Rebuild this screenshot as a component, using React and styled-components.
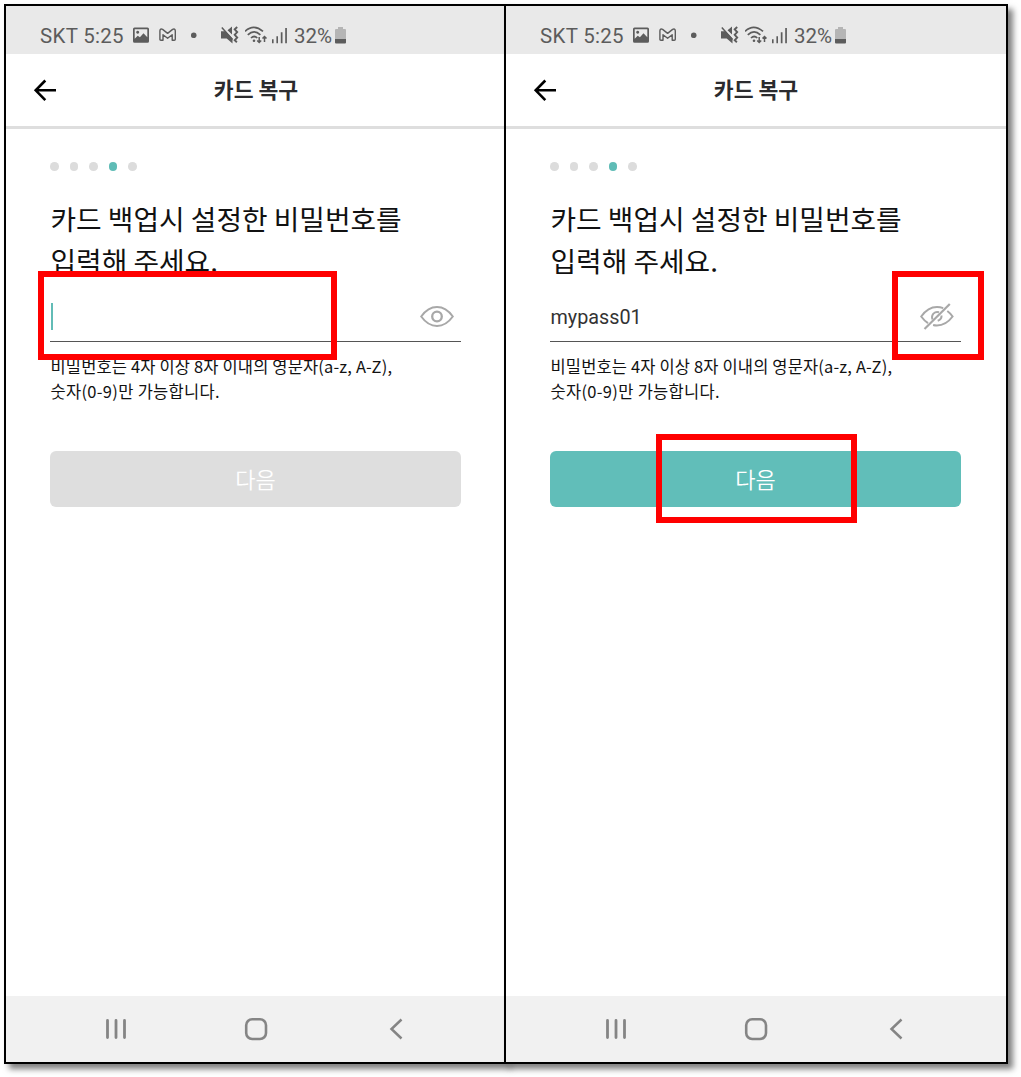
import React from "react";
import styled, { createGlobalStyle } from "styled-components";

const GlobalStyle = createGlobalStyle`
  * { box-sizing: border-box; }
  body { margin: 0; background: #fff; }
`;

const KR = `"Noto Sans CJK KR", sans-serif`;

const Board = styled.main`
  display: flex;
  width: 1021px;
  height: 1077px;
  padding: 4px;
  overflow: hidden;
`;

const Phone = styled.section`
  position: relative;
  display: flex;
  flex-direction: column;
  flex: none;
  width: ${(p) => p.$width}px;
  height: 1060px;
  border: 2px solid #000;
  background: #fff;
  box-shadow: 5px 5px 6px rgba(0, 0, 0, 0.5);
  & + & { margin-left: -2px; }
`;

const StatusBar = styled.div`
  display: flex;
  align-items: center;
  height: 48px;
  padding: 12px 0 0 34px;
  background: #e9e9e9;
  color: #5c5c5c;
  svg { display: block; flex: none; }
`;

const StatusText = styled.span`
  width: ${(p) => p.$width}px;
  font: 400 20.5px/24px Roboto, sans-serif;
  letter-spacing: ${(p) => p.$spacing || 0}px;
  white-space: nowrap;
`;

const Gap = styled.i`
  flex: none;
  width: ${(p) => p.$w}px;
`;

const Header = styled.header`
  display: grid;
  grid-template-columns: 28px 1fr 28px;
  align-items: center;
  height: 75px;
  padding: 0 ${(p) => p.$right}px 0 25px;
  border-bottom: 3px solid #dedede;
`;

const BackButton = styled.button`
  display: block;
  padding: 0;
  border: 0;
  background: none;
  svg { display: block; }
`;

const Title = styled.h1`
  margin: 0 0 2px;
  text-align: center;
  color: #2b2b2e;
  font: 700 21.6px/32px ${KR};
`;

const Content = styled.div`
  flex: 1;
  width: 455px;
  padding: 33px 0 0 44px;
`;

const Steps = styled.div`
  display: flex;
  gap: 11px;
`;

const Step = styled.i`
  width: 8.5px;
  height: 8.5px;
  border-radius: 50%;
  background: ${(p) => (p.$active ? "#5fbcb6" : "#dcdcdc")};
`;

const Question = styled.h2`
  margin: 27.5px 0 0;
  padding-left: 0.5px;
  color: #111;
  font: 400 27.8px/41.5px ${KR};
  white-space: nowrap;
`;

const Field = styled.div`
  display: flex;
  align-items: center;
  justify-content: space-between;
  height: 60.5px;
  padding: 10.5px 7px 0 0;
  border-bottom: 1px solid #555;
  svg { display: block; }
`;

const Caret = styled.i`
  width: 2.5px;
  height: 27px;
  margin-left: 0.5px;
  background: #62bcb6;
`;

const Value = styled.span`
  padding: 3px 0 0 0.5px;
  color: #333;
  font: 400 19.8px/26px Roboto, sans-serif;
`;

const Hint = styled.p`
  margin: 12px 0 0;
  padding-left: 0.5px;
  color: #111;
  font: 400 16.5px/25px ${KR};
  white-space: nowrap;
`;

const HintLine = styled.span`
  display: block;
  letter-spacing: ${(p) => p.$spacing}px;
`;

const NextButton = styled.button`
  display: block;
  width: 100%;
  height: 56px;
  margin-top: 47px;
  padding: 0 0 1px;
  border: 0;
  border-radius: 6px;
  background: ${(p) => (p.$enabled ? "#61beb9" : "#dedede")};
  color: #fff;
  font: 350 22px/32px ${KR};
`;

const NavBar = styled.nav`
  display: flex;
  height: 66px;
  align-items: center;
  justify-content: space-between;
  width: 100%;
  padding: 0 ${(p) => p.$right}px 0 98px;
  background: #f1f1f1;
`;

const Highlight = styled.div`
  position: absolute;
  left: ${(p) => p.$x}px;
  top: ${(p) => p.$y}px;
  width: ${(p) => p.$w}px;
  height: 89px;
  border: 6px solid #f00;
`;

const PictureIcon = () => (
  <svg width="17" height="24" viewBox="0 0 17 24" fill="#5c5c5c">
    <path fillRule="evenodd" d="M1.500 3.500h13Q16 3.500 16 5v12.200q0 1.500-1.500 1.500h-13Q0 18.700 0 17.200V5Q0 3.500 1.500 3.500zM1.700 5.200v9.600l3-3 2.200 1.400 3.600-4 3.800 4V5.200zM4.700 6.700a1.500 1.500 0 1 1-.01 0z" />
  </svg>
);

const MailIcon = () => (
  <svg width="18" height="24" viewBox="0 0 18 24" fill="none" stroke="#5c5c5c" strokeWidth="1.400" strokeLinejoin="round">
    <path d="M.9 15.300V6.900Q1.200 4.200 3.600 5.400L8.600 9.400l5-4q2.400-1.200 2.700 1.500v8.400q0 1-1 1h-2.100V10.700L8.600 14.300 4 10.700v5.600H1.900q-1 0-1-1z" />
  </svg>
);

const BulletIcon = () => (
  <svg width="6" height="24" viewBox="0 0 6 24" fill="#5c5c5c">
    <circle cx="2.700" cy="11.300" r="2.800" />
  </svg>
);

const MuteIcon = () => (
  <svg width="19" height="24" viewBox="0 0 19 24" fill="#5c5c5c">
    <path d="M0 7.300h4.500l7 7.300v5l-5.800-5H0zM6.500 6.200l4.500-3.700v8z" />
    <path d="M.8 3.600l10.700 12" fill="none" stroke="#5c5c5c" strokeWidth="1.500" />
    <path d="M16.200 3l-2.500 2.300 2.500 2.800-2.500 2.700 2.500 2.800-2.500 2.700 2.200 2" fill="none" stroke="#5c5c5c" strokeWidth="1.900" />
  </svg>
);

const WifiIcon = () => (
  <svg width="23" height="24" viewBox="0 0 23 24" fill="none" stroke="#5c5c5c" strokeWidth="1.700">
    <path d="M0 7.300q8.500-8 18 0M2.800 10.800q6.200-6 12.600 0M6 14q3.200-3 6.300 0" />
    <circle cx="9" cy="16.700" r="1.300" fill="#5c5c5c" stroke="none" />
    <path d="M14.200 13v5.500M12.200 16.500l2 2 2-2M19.500 18v-5.500M17.500 14.500l2-2 2 2" strokeWidth="1.500" />
  </svg>
);

const SignalIcon = () => (
  <svg width="17" height="24" viewBox="0 0 17 24" fill="#5c5c5c">
    <path d="M0 15.300h1.600v4H0zM4.400 12.300H6v7H4.400zM8.800 8.200h1.700v11.100H8.800zM13.200 4h1.700v15.300h-1.700z" />
  </svg>
);

const BatteryIcon = () => (
  <svg width="12" height="24" viewBox="0 0 12 24">
    <path d="M3 3h5v2h2q1 0 1 1v9H0V6q0-1 1-1h2z" fill="#b5b5b5" />
    <path d="M0 15h11v3.500q0 1-1 1H1q-1 0-1-1z" fill="#5c5c5c" />
  </svg>
);

const EyeIcon = ({ off }) => (
  <svg width="34" height="28" viewBox="0 0 34 28" fill="none" stroke="#a8a8a8" strokeWidth="2">
    {off ? (
      <>
        <path d="M8 21.200Q4.200 18.600 1.200 14.500 8 5 17 5q3.300 0 6.200 1.200M27.300 9q2.900 2.100 5.300 5.500-6.700 9-15.700 9-2 0-3.800-.5M12.500 17.500q-1.300-3.300.9-5.900 2.500-2.400 5.600-1.300M21.500 13.500q.3 3.800-3.800 5.200" />
        <path d="M4.500 27L29.800 2" strokeWidth="2.200" />
      </>
    ) : (
      <>
        <path d="M1.200 14.500Q8 5 17 5T32.800 14.500Q26 24 17 24T1.200 14.500z" />
        <circle cx="17" cy="14.500" r="4.800" strokeWidth="2.300" />
      </>
    )}
  </svg>
);

const Status = () => (
  <StatusBar>
    <StatusText $width={93} $spacing={0.3}>SKT 5:25</StatusText>
    <PictureIcon />
    <Gap $w={9} />
    <MailIcon />
    <Gap $w={14} />
    <BulletIcon />
    <Gap $w={24} />
    <MuteIcon />
    <Gap $w={5} />
    <WifiIcon />
    <Gap $w={4} />
    <SignalIcon />
    <Gap $w={5} />
    <StatusText $width={41}>32%</StatusText>
    <BatteryIcon />
  </StatusBar>
);

const Screen = ({ width, value, children }) => (
  <Phone $width={width}>
    <Status />
    <Header $right={width - 479}>
      <BackButton aria-label="뒤로">
        <svg width="28" height="26" viewBox="0 0 28 26" fill="none" stroke="#000" strokeWidth="2.600">
          <path d="M25 13.300H5M14.300 3.500L4.700 13.300l9.600 9.800" />
        </svg>
      </BackButton>
      <Title>카드 복구</Title>
    </Header>
    <Content>
      <Steps>
        {[0, 1, 2, 3, 4].map((n) => <Step key={n} $active={n === 3} />)}
      </Steps>
      <Question>카드 백업시 설정한 비밀번호를<br />입력해 주세요.</Question>
      <Field>
        {value ? <Value>{value}</Value> : <Caret />}
        <EyeIcon off={Boolean(value)} />
      </Field>
      <Hint>
        <HintLine $spacing={0.15}>비밀번호는 4자 이상 8자 이내의 영문자(a-z, A-Z),</HintLine>
        <HintLine $spacing={0.3}>숫자(0-9)만 가능합니다.</HintLine>
      </Hint>
      <NextButton $enabled={Boolean(value)}>다음</NextButton>
    </Content>
    <NavBar $right={width - 406}>
      <svg width="24" height="24" viewBox="0 0 24 24" stroke="#858585" strokeWidth="2.800" strokeLinecap="round">
        <path d="M3.500 3.500v17M12 3.500v17M20.500 3.500v17" />
      </svg>
      <svg width="24" height="24" viewBox="0 0 24 24" fill="none" stroke="#858585" strokeWidth="2.600">
        <rect x="2.200" y="2.200" width="19.800" height="19.800" rx="6" />
      </svg>
      <svg width="24" height="24" viewBox="0 0 24 24" fill="none" stroke="#858585" strokeWidth="2.500">
        <path d="M17.500 2.500L7.500 12l10 9.500" />
      </svg>
    </NavBar>
    {children}
  </Phone>
);

export default function App() {
  return (
    <>
      <GlobalStyle />
      <Board>
        <Screen width={502}>
          <Highlight $x={32} $y={265} $w={299} />
        </Screen>
        <Screen width={504} value="mypass01">
          <Highlight $x={386} $y={265} $w={92} />
          <Highlight $x={150} $y={428} $w={201} />
        </Screen>
      </Board>
    </>
  );
}
